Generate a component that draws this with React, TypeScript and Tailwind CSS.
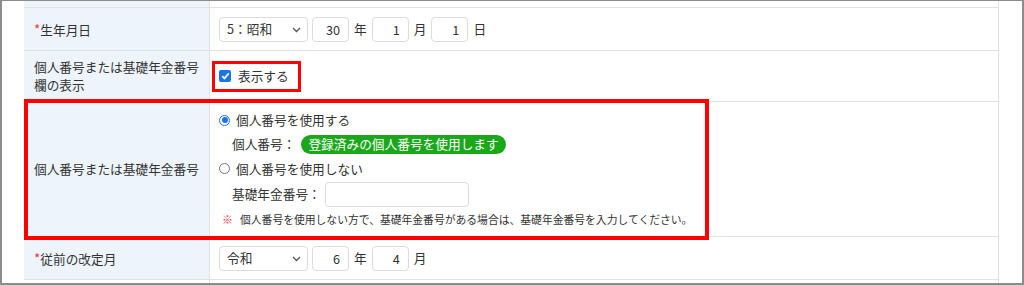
import React from 'react'

const font = { fontFamily: '"Noto Sans CJK JP", "Noto Sans", sans-serif' }

function Select({ label }: { label: string }) {
  return (
    <div className="flex h-[25px] w-[89px] items-center justify-between rounded-[4px] border border-[#dcdcdc] bg-white pl-[7px] pr-[6px] text-[12.7px] text-[#333]">
      <span>{label}</span>
      <svg width="9" height="6" viewBox="0 0 9 6" className="mt-[1px]">
        <path d="M1 1l3.5 3.5L8 1" fill="none" stroke="#555" strokeWidth="1.3" />
      </svg>
    </div>
  )
}

function NumBox({ value }: { value: string }) {
  return (
    <input
      readOnly
      value={value}
      className="h-[25px] w-[37px] rounded-[4px] border border-[#dcdcdc] bg-white pr-[8px] text-right text-[12.7px] text-[#333] outline-none"
    />
  )
}

function Radio({ checked }: { checked?: boolean }) {
  return checked ? (
    <span className="flex h-[11px] w-[11px] items-center justify-center rounded-full border border-[#1a73e8] bg-white">
      <span className="h-[6px] w-[6px] rounded-full bg-[#1a73e8]" />
    </span>
  ) : (
    <span className="h-[11px] w-[11px] rounded-full border border-[#767676] bg-white" />
  )
}

function Label({ children, required }: { children: React.ReactNode; required?: boolean }) {
  return (
    <div className="flex w-[186px] shrink-0 items-center border-r border-[#e2e2e2] bg-[#edf4fb] px-[10px] text-[12.7px] leading-[18px] text-[#333]">
      <div>
        {required && <span className="text-[13.5px] text-[#e8383d]">*</span>}
        {children}
      </div>
    </div>
  )
}

export default function App() {
  return (
    <div
      style={font}
      className="relative h-[285px] w-[1024px] overflow-hidden border-t border-l-2 border-r-2 border-b-2 border-[#8c8c8c] bg-white"
    >
      <div className="ml-[22px] flex h-full w-[975px] flex-col border-r border-[#e2e2e2]">
        {/* cut-off top row */}
        <div className="flex h-[7px] border-b border-[#e2e2e2]">
          <div className="w-[186px] border-r border-[#e2e2e2] bg-[#edf4fb]" />
        </div>

        {/* 生年月日 */}
        <div className="flex h-[43px] border-b border-[#e2e2e2]">
          <Label required>生年月日</Label>
          <div className="flex items-center gap-[4px] pl-[9px] text-[12.7px] text-[#333]">
            <Select label="5：昭和" />
            <NumBox value="30" />
            <span className="px-[1px]">年</span>
            <NumBox value="1" />
            <span className="px-[1px]">月</span>
            <NumBox value="1" />
            <span className="px-[1px]">日</span>
          </div>
        </div>

        {/* 表示 */}
        <div className="flex h-[51px] border-b border-[#e2e2e2]">
          <Label>
            個人番号または基礎年金番号
            <br />
            欄の表示
          </Label>
          <div className="flex items-center gap-[7px] pl-[9px] text-[12.7px] text-[#333]">
            <span className="flex h-[12px] w-[12px] items-center justify-center rounded-[2px] bg-[#1a73e8]">
              <svg width="9" height="8" viewBox="0 0 9 8">
                <path d="M1.2 4.2l2.2 2.2L7.8 1.4" fill="none" stroke="#fff" strokeWidth="1.7" />
              </svg>
            </span>
            <span>表示する</span>
          </div>
        </div>

        {/* 個人番号または基礎年金番号 */}
        <div className="flex h-[135px] border-b border-[#e2e2e2]">
          <Label>個人番号または基礎年金番号</Label>
          <div className="flex flex-col pl-[9px] pt-[6px] text-[12.7px] text-[#333]">
            <div className="flex h-[24px] items-center gap-[6px]">
              <Radio checked />
              <span>個人番号を使用する</span>
            </div>
            <div className="flex h-[24px] items-center gap-[6px] pl-[13px]">
              <span>個人番号：</span>
              <span className="flex h-[19px] items-center rounded-full bg-[#1aa81a] px-[7px] text-white">
                登録済みの個人番号を使用します
              </span>
            </div>
            <div className="flex h-[25px] items-center gap-[6px]">
              <Radio />
              <span>個人番号を使用しない</span>
            </div>
            <div className="flex h-[26px] items-center gap-[4px] pl-[13px]">
              <span>基礎年金番号：</span>
              <input
                readOnly
                className="h-[25px] w-[144px] rounded-[4px] border border-[#dcdcdc] bg-white outline-none"
              />
            </div>
            <div className="flex h-[24px] items-center pl-[3px] text-[10.8px]">
              <span className="mr-[7px] text-[11px] font-bold text-[#e8383d]">※</span>
              <span>個人番号を使用しない方で、基礎年金番号がある場合は、基礎年金番号を入力してください。</span>
            </div>
          </div>
        </div>

        {/* 従前の改定月 */}
        <div className="flex h-[43px] border-b border-[#e2e2e2]">
          <Label required>従前の改定月</Label>
          <div className="flex items-center gap-[4px] pl-[9px] text-[12.7px] text-[#333]">
            <Select label="令和" />
            <NumBox value="6" />
            <span className="px-[1px]">年</span>
            <NumBox value="4" />
            <span className="px-[1px]">月</span>
          </div>
        </div>
        <div className="flex flex-1">
          <div className="w-[186px] border-r border-[#e2e2e2]" />
        </div>
      </div>

      {/* annotation boxes */}
      <div className="absolute left-[210px] top-[60px] h-[31px] w-[89px] border-[3px] border-[#ff0000]" />
      <div className="absolute left-[22px] top-[98px] h-[141px] w-[685px] border-[4px] border-[#ff0000]" />
    </div>
  )
}
